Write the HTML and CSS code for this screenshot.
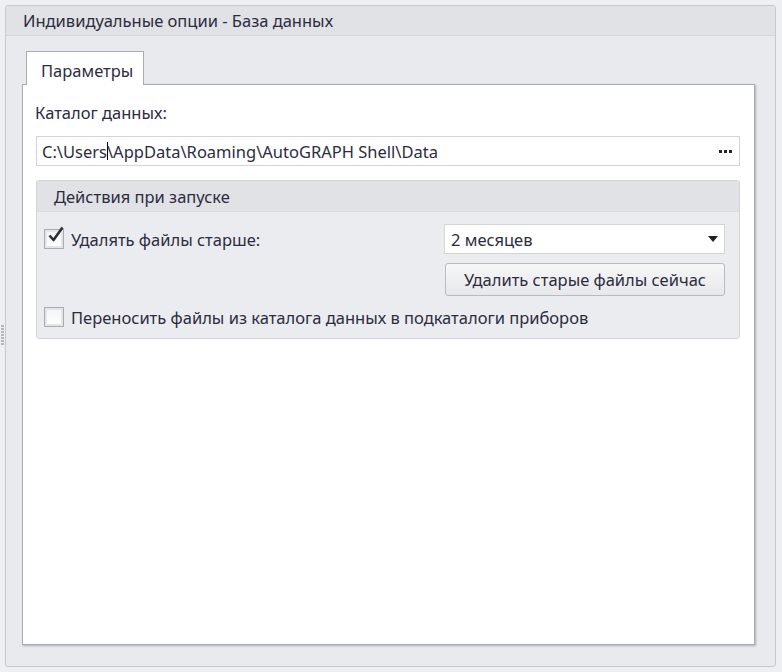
FILE: index.html
```html
<!DOCTYPE html>
<html lang="ru">
<head>
<meta charset="utf-8">
<title>Индивидуальные опции - База данных</title>
<link rel="stylesheet" href="styles.css">
</head>
<body>
<div class="grip"><span></span><span></span><span></span><span></span><span></span><span></span><span></span></div>
<div class="panel">
  <div class="panel-header">Индивидуальные опции - База данных</div>
  <div class="panel-body">
    <div class="tabs">
      <div class="tab">Параметры</div>
    </div>
    <div class="page">
      <div class="field-label">Каталог данных:</div>
      <div class="textbox">
        <span class="path">C:\Users<span class="caret"></span>\AppData\Roaming\AutoGRAPH Shell\Data</span>
        <span class="dots"><i></i><i></i><i></i></span>
      </div>
      <div class="group">
        <div class="group-header">Действия при запуске</div>
        <div class="group-body">
          <div class="row">
            <label class="check">
              <span class="box checked">
                <svg width="20" height="20" viewBox="0 0 20 20"><path d="M3.5 10.5 L7.5 15 L16.5 2.5" fill="none" stroke="#2d2f33" stroke-width="2.6" stroke-linejoin="round"/></svg>
              </span>
              <span class="check-text">Удалять файлы старше:</span>
            </label>
            <div class="right-col">
              <div class="combo">
                <span>2 месяцев</span>
                <svg width="10" height="6" viewBox="0 0 10 6"><path d="M0 0 H10 L5 6 Z" fill="#222"/></svg>
              </div>
              <div class="button">Удалить старые файлы сейчас</div>
            </div>
          </div>
          <label class="check check2">
            <span class="box"></span>
            <span class="check-text">Переносить файлы из каталога данных в подкаталоги приборов</span>
          </label>
        </div>
      </div>
    </div>
  </div>
</div>
</body>
</html>
```

FILE: styles.css
```css
* { box-sizing: border-box; }
html, body { margin: 0; padding: 0; }
body {
  width: 782px;
  height: 672px;
  background: #eeeff2;
  font-family: "Noto Sans", "Open Sans", sans-serif;
  font-size: 16.5px;
  color: #2f2f33;
  position: relative;
  overflow: hidden;
  padding: 5px 6px 5px 5px;
}
.grip {
  position: absolute;
  left: 1px;
  top: 325px;
  display: flex;
  flex-direction: column;
  gap: 1px;
}
.grip span {
  width: 3px;
  height: 2px;
  background: #b4b6bc;
}
.panel {
  width: 771px;
  height: 662px;
  border: 1px solid #c7c8cd;
  border-radius: 3px;
  background: #e9eaee;
  display: flex;
  flex-direction: column;
}
.panel-header {
  height: 30px;
  background: #e1e2e6;
  border-bottom: 1px solid #d5d6db;
  padding-left: 17px;
  display: flex;
  align-items: center;
  color: #2c2c40;
  border-radius: 3px 3px 0 0;
}
.panel-body {
  flex: 1;
  padding: 15px 20px 21px 16px;
  display: flex;
  flex-direction: column;
}
.tabs {
  display: flex;
  padding-left: 4px;
  height: 34px;
  position: relative;
  z-index: 1;
}
.tab {
  width: 118px;
  height: 34px;
  background: #fff;
  border: 1px solid #a9acb4;
  border-bottom: none;
  padding-left: 14px;
  padding-top: 7px;
  color: #2c2c40;
}
.page {
  flex: 1;
  margin-top: -1px;
  background: #fff;
  border: 1px solid #a9acb4;
  box-shadow: 1px 1px 2px rgba(60, 64, 80, 0.35);
  padding: 16px 14px 0 12px;
  display: flex;
  flex-direction: column;
}
.field-label {
  height: 24px;
  line-height: 24px;
  color: #2c2c40;
}
.textbox {
  margin-top: 11px;
  margin-left: 1px;
  height: 30px;
  border: 1px solid #d3d4d8;
  display: flex;
  align-items: center;
  justify-content: space-between;
  padding: 0 7px 0 5px;
}
.path { color: #2c2c40; display: flex; align-items: center; }
.caret {
  display: inline-block;
  width: 1px;
  height: 18px;
  background: #000;
  margin: 0 -1px 0 0;
}
.dots { display: flex; gap: 2px; }
.dots i {
  width: 3px;
  height: 3px;
  background: #26272c;
  display: block;
}
.group {
  margin-top: 14px;
  margin-left: 1px;
  height: 159px;
  border: 1px solid #d3d4d9;
  border-radius: 3px;
  background: #ebecef;
  display: flex;
  flex-direction: column;
}
.group-header {
  height: 31px;
  background: #e1e2e6;
  border-bottom: 1px solid #dcdde1;
  padding-left: 17px;
  display: flex;
  align-items: center;
  color: #2c2c40;
  border-radius: 3px 3px 0 0;
}
.group-body {
  padding: 12px 14px 0 7px;
  display: flex;
  flex-direction: column;
}
.row {
  display: flex;
  justify-content: space-between;
  align-items: flex-start;
}
.check {
  display: flex;
  align-items: center;
  height: 30px;
  gap: 7px;
}
.check .box {
  width: 20px;
  height: 20px;
  border: 1px solid #a9abb1;
  background: linear-gradient(#f4f4f6, #ffffff);
  box-shadow: inset 0 0 0 2px #e4e5e8;
  position: relative;
}
.check .box svg {
  position: absolute;
  left: 1px;
  top: -5px;
}
.check-text { color: #2c2c40; }
.right-col {
  width: 281px;
  display: flex;
  flex-direction: column;
  gap: 9px;
}
.combo {
  height: 30px;
  background: #fff;
  border: 1px solid #d3d4d8;
  display: flex;
  align-items: center;
  justify-content: space-between;
  padding: 0 6px 0 6px;
  color: #2c2c40;
}
.button {
  height: 33px;
  margin-left: 1px;
  border: 1px solid #b9bbc1;
  border-radius: 3px;
  background: linear-gradient(#f7f7f9, #e7e8eb);
  display: flex;
  align-items: center;
  justify-content: center;
  color: #2c2c40;
}
.check2 { margin-top: 8px; height: 26px; }
```
